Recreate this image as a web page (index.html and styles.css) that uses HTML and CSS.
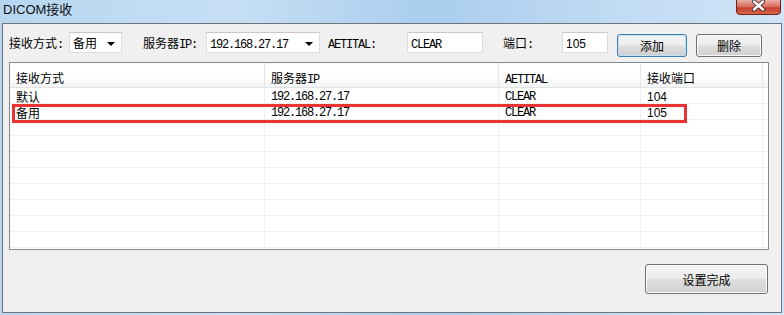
FILE: index.html
```html
<!DOCTYPE html>
<html lang="zh-CN">
<head>
    <meta charset="UTF-8">
    <title>DICOM接收</title>
    <link rel="stylesheet" href="styles.css">
</head>
<body>
    <div class="window">
        <div class="titlebar">
            <span class="title">DICOM接收</span>
            <span class="close-btn">
                <svg width="45" height="15" viewBox="0 0 45 15">
                    <defs>
                        <linearGradient id="closeGrad" x1="0" y1="0" x2="0" y2="1">
                            <stop offset="0" stop-color="#eab0a4"/>
                            <stop offset="0.45" stop-color="#d86c5f"/>
                            <stop offset="0.55" stop-color="#c43f2e"/>
                            <stop offset="1" stop-color="#dc6a50"/>
                        </linearGradient>
                    </defs>
                    <path d="M0.5 0 V11 Q0.5 14.5 4 14.5 H41 Q44.5 14.5 44.5 11 V0" fill="url(#closeGrad)" stroke="#6f231a"/>
                    <path d="M18 1.5 L27 9.5 M27 1.5 L18 9.5" stroke="#4a2b28" stroke-width="4.2" stroke-linecap="round"/>
                    <path d="M18 1.5 L27 9.5 M27 1.5 L18 9.5" stroke="#fff" stroke-width="2.4" stroke-linecap="round"/>
                </svg>
            </span>
        </div>
        <div class="client">
            <div class="toolbar">
                <span class="lbl lbl-mode">接收方式<span class="mono">:</span></span>
                <div class="combo combo-mode"><span>备用</span><i class="arrow"></i></div>
                <span class="lbl lbl-server">服务器<span class="mono">IP:</span></span>
                <div class="combo combo-server"><span class="mono">192.168.27.17</span><i class="arrow"></i></div>
                <span class="lbl lbl-ae"><span class="mono">AETITAL:</span></span>
                <div class="field field-ae"><span class="mono">CLEAR</span></div>
                <span class="lbl lbl-port">端口<span class="mono">:</span></span>
                <div class="field field-port"><span class="num">105</span></div>
                <button class="btn btn-add">添加</button>
                <button class="btn btn-del">删除</button>
            </div>

            <div class="grid">
                <div class="row head">
                    <div class="cell">接收方式</div>
                    <div class="cell">服务器<span class="mono">IP</span></div>
                    <div class="cell"><span class="mono">AETITAL</span></div>
                    <div class="cell">接收端口</div>
                    <div class="cell"></div>
                </div>
                <div class="row">
                    <div class="cell">默认</div>
                    <div class="cell mono">192.168.27.17</div>
                    <div class="cell mono">CLEAR</div>
                    <div class="cell num">104</div>
                    <div class="cell"></div>
                </div>
                <div class="row">
                    <div class="cell">备用</div>
                    <div class="cell mono">192.168.27.17</div>
                    <div class="cell mono">CLEAR</div>
                    <div class="cell num">105</div>
                    <div class="cell"></div>
                </div>
                <div class="row"><div class="cell"></div><div class="cell"></div><div class="cell"></div><div class="cell"></div><div class="cell"></div></div>
                <div class="row"><div class="cell"></div><div class="cell"></div><div class="cell"></div><div class="cell"></div><div class="cell"></div></div>
                <div class="row"><div class="cell"></div><div class="cell"></div><div class="cell"></div><div class="cell"></div><div class="cell"></div></div>
                <div class="row"><div class="cell"></div><div class="cell"></div><div class="cell"></div><div class="cell"></div><div class="cell"></div></div>
                <div class="row"><div class="cell"></div><div class="cell"></div><div class="cell"></div><div class="cell"></div><div class="cell"></div></div>
                <div class="row"><div class="cell"></div><div class="cell"></div><div class="cell"></div><div class="cell"></div><div class="cell"></div></div>
                <div class="row"><div class="cell"></div><div class="cell"></div><div class="cell"></div><div class="cell"></div><div class="cell"></div></div>
                <div class="row"><div class="cell"></div><div class="cell"></div><div class="cell"></div><div class="cell"></div><div class="cell"></div></div>
                <!-- red highlight around the selected row -->
                <div class="mark"></div>
            </div>

            <div class="footer">
                <button class="btn btn-done">设置完成</button>
            </div>
        </div>
    </div>
</body>
</html>
```

FILE: styles.css
```css
* {
    box-sizing: border-box;
}
body {
    margin: 0;
    width: 784px;
    height: 315px;
    overflow: hidden;
    font-family: "Noto Sans CJK SC", sans-serif;
    font-size: 12px;
    color: #000;
}
.window {
    width: 784px;
    height: 315px;
    display: flex;
    flex-direction: column;
    background: linear-gradient(90deg, #b8d6f1 0%, #c6dff5 30%, #aacdee 55%, #c2dcf4 80%, #cfe4f7 100%);
}
.titlebar {
    height: 23px;
    display: flex;
    flex: none;
}
.title {
    padding-left: 3px;
    line-height: 20px;
    font-family: "Liberation Sans", "Noto Sans CJK SC", sans-serif;
    font-size: 13px;
    color: #111;
}
.close-btn {
    margin-left: auto;
    margin-right: 3px;
    height: 15px;
}
.close-btn svg {
    display: block;
}
.client {
    flex: 1;
    margin: 0 2px 2px 2px;
    border: 1px solid #6c747d;
    background: #f0f0f0;
    display: flex;
    flex-direction: column;
}
.mono {
    font-family: "Liberation Mono", monospace;
    letter-spacing: -1.2px;
}
.num {
    font-family: "Liberation Sans", sans-serif;
}

/* top row */
.toolbar {
    height: 38px;
    flex: none;
    display: flex;
    align-items: flex-start;
    padding-left: 6px;
}
.toolbar > * {
    flex: none;
}
.lbl {
    margin-top: 8px;
    height: 21px;
    line-height: 21px;
    white-space: nowrap;
}
.lbl-mode { width: 54px; }
.lbl-server { width: 57px; margin-left: 21px; }
.lbl-ae { width: 47px; margin-left: 8px; }
.lbl-port { width: 30px; margin-left: 20px; }

.combo, .field {
    margin-top: 8px;
    height: 21px;
    line-height: 19px;
    background: #fff;
    border: 1px solid #dcdcdc;
    border-top-color: #c8c8c8;
    padding-left: 3px;
    white-space: nowrap;
}
.combo {
    position: relative;
    margin-left: 6px;
}
.combo-mode { width: 53px; }
.combo-server { width: 114px; }
.arrow {
    position: absolute;
    right: 6px;
    top: 9px;
    width: 0;
    height: 0;
    border-left: 4px solid transparent;
    border-right: 4px solid transparent;
    border-top: 4px solid #000;
}
.field-ae { width: 76px; margin-left: 32px; }
.field-port { width: 46px; margin-left: 29px; }

.btn {
    margin-top: 10px;
    height: 23px;
    padding: 0;
    border: 1px solid #707070;
    border-radius: 3px;
    background: linear-gradient(#f4f4f4 0%, #ececec 48%, #dedede 52%, #d0d0d0 100%);
    box-shadow: inset 0 0 0 1px #fbfbfb;
    font-family: "Noto Sans CJK SC", sans-serif;
    font-size: 12px;
    color: #000;
}
.btn-add {
    width: 70px;
    margin-left: 9px;
    border-color: #3c7fb1;
    box-shadow: inset 0 0 0 1px #c4e2f6;
}
.btn-del {
    width: 66px;
    margin-left: 9px;
}

/* list */
.grid {
    position: relative;
    flex: none;
    margin-left: 6px;
    width: 760px;
    height: 188px;
    border: 1px solid #828790;
    background: #fff;
    overflow: hidden;
}
.row {
    display: grid;
    grid-template-columns: 255px 234px 142px 122px 1fr;
    height: 16px;
}
.cell {
    height: 16px;
    padding: 3px 0 0 6px;
    line-height: 12px;
    border-right: 1px solid #f0f0f0;
    border-bottom: 1px solid #f0f0f0;
    white-space: nowrap;
}
.cell:last-child {
    border-right: none;
}
.head {
    height: 25px;
}
.head .cell {
    height: 25px;
    padding-top: 8px;
    line-height: 14px;
    background: linear-gradient(#fff 55%, #f3f4f6);
    border-right-color: #e5e5e5;
    border-bottom-color: #e3e3e3;
}
.mark {
    position: absolute;
    left: 2px;
    top: 41px;
    width: 675px;
    height: 19px;
    border: 3px solid #ea3434;
}

.footer {
    display: flex;
    justify-content: flex-end;
    padding-right: 13px;
    margin-top: 14px;
}
.btn-done {
    margin-top: 0;
    width: 123px;
    height: 30px;
}
```
